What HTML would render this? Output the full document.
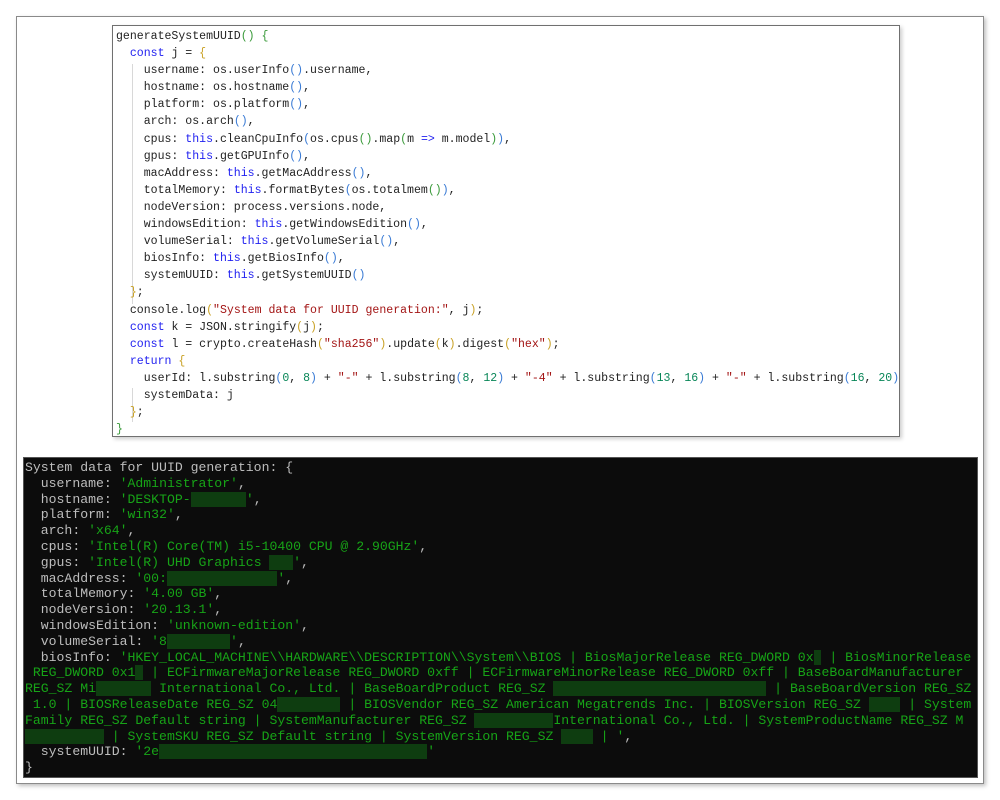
<!DOCTYPE html>
<html><head><meta charset="utf-8"><style>
body{margin:0;width:1000px;height:800px;background:#fff;position:relative;overflow:hidden}
#outer{position:absolute;left:16px;top:16px;width:966px;height:766px;border:1px solid #8a8a8a;box-shadow:2px 2px 4px rgba(0,0,0,.25);background:#fff}
#code{position:absolute;left:112px;top:25px;width:786px;height:410px;border:1px solid #707070;box-shadow:2px 2px 4px rgba(0,0,0,.2);background:#fff;overflow:hidden}
#code pre{margin:0;position:absolute;left:3px;top:2px;font-family:"Liberation Mono",monospace;font-size:11.55px;line-height:17.1px;color:#222}
.k{color:#1f1ff0}.s{color:#a31515}.n{color:#098658}.p{color:#3a7bd5}.g{color:#3a9a3a}.o{color:#c9a227}
.guide{position:absolute;width:1px;background:#d8d8d8}
#con{position:absolute;left:23px;top:457px;width:953px;height:319px;background:#0c0c0c;border:1px solid #555;overflow:hidden}
#con pre{margin:0;position:absolute;left:1px;top:2px;font-family:"Liberation Mono",monospace;font-size:13.15px;line-height:15.8px;color:#bdbdbd;white-space:pre}
.c{color:#17a417}
.r{background:#0e3d10;color:transparent}
</style></head><body>
<div id="outer"></div>
<div id="code">
<div class="guide" style="left:19px;top:38px;height:240px"></div>
<div class="guide" style="left:19px;top:362px;height:34px"></div>
<pre>generateSystemUUID<span class="g">()</span> <span class="g">{</span>
  <span class="k">const</span> j = <span class="o">{</span>
    username: os.userInfo<span class="p">()</span>.username,
    hostname: os.hostname<span class="p">()</span>,
    platform: os.platform<span class="p">()</span>,
    arch: os.arch<span class="p">()</span>,
    cpus: <span class="k">this</span>.cleanCpuInfo<span class="p">(</span>os.cpus<span class="g">()</span>.map<span class="g">(</span>m <span class="k">=&gt;</span> m.model<span class="g">)</span><span class="p">)</span>,
    gpus: <span class="k">this</span>.getGPUInfo<span class="p">()</span>,
    macAddress: <span class="k">this</span>.getMacAddress<span class="p">()</span>,
    totalMemory: <span class="k">this</span>.formatBytes<span class="p">(</span>os.totalmem<span class="g">()</span><span class="p">)</span>,
    nodeVersion: process.versions.node,
    windowsEdition: <span class="k">this</span>.getWindowsEdition<span class="p">()</span>,
    volumeSerial: <span class="k">this</span>.getVolumeSerial<span class="p">()</span>,
    biosInfo: <span class="k">this</span>.getBiosInfo<span class="p">()</span>,
    systemUUID: <span class="k">this</span>.getSystemUUID<span class="p">()</span>
  <span class="o">}</span>;
  console.log<span class="o">(</span><span class="s">"System data for UUID generation:"</span>, j<span class="o">)</span>;
  <span class="k">const</span> k = JSON.stringify<span class="o">(</span>j<span class="o">)</span>;
  <span class="k">const</span> l = crypto.createHash<span class="o">(</span><span class="s">"sha256"</span><span class="o">)</span>.update<span class="o">(</span>k<span class="o">)</span>.digest<span class="o">(</span><span class="s">"hex"</span><span class="o">)</span>;
  <span class="k">return</span> <span class="o">{</span>
    userId: l.substring<span class="p">(</span><span class="n">0</span>, <span class="n">8</span><span class="p">)</span> + <span class="s">"-"</span> + l.substring<span class="p">(</span><span class="n">8</span>, <span class="n">12</span><span class="p">)</span> + <span class="s">"-4"</span> + l.substring<span class="p">(</span><span class="n">13</span>, <span class="n">16</span><span class="p">)</span> + <span class="s">"-"</span> + l.substring<span class="p">(</span><span class="n">16</span>, <span class="n">20</span><span class="p">)</span>
    systemData: j
  <span class="o">}</span>;
<span class="g">}</span></pre>
</div>
<div id="con"><pre>System data for UUID generation: {
  username: <span class="c">'Administrator'</span>,
  hostname: <span class="c">'DESKTOP-<span class="r">XXXXXXX</span>'</span>,
  platform: <span class="c">'win32'</span>,
  arch: <span class="c">'x64'</span>,
  cpus: <span class="c">'Intel(R) Core(TM) i5-10400 CPU @ 2.90GHz'</span>,
  gpus: <span class="c">'Intel(R) UHD Graphics <span class="r">XXX</span>'</span>,
  macAddress: <span class="c">'00:<span class="r">XXXXXXXXXXXXXX</span>'</span>,
  totalMemory: <span class="c">'4.00 GB'</span>,
  nodeVersion: <span class="c">'20.13.1'</span>,
  windowsEdition: <span class="c">'unknown-edition'</span>,
  volumeSerial: <span class="c">'8<span class="r">XXXXXXXX</span>'</span>,
  biosInfo: <span class="c">'HKEY_LOCAL_MACHINE\\HARDWARE\\DESCRIPTION\\System\\BIOS | BiosMajorRelease REG_DWORD 0x<span class="r">X</span> | BiosMinorRelease</span>
<span class="c"> REG_DWORD 0x1<span class="r">X</span> | ECFirmwareMajorRelease REG_DWORD 0xff | ECFirmwareMinorRelease REG_DWORD 0xff | BaseBoardManufacturer</span>
<span class="c">REG_SZ Mi<span class="r">XXXXXXX</span> International Co., Ltd. | BaseBoardProduct REG_SZ <span class="r">XXXXXXXXXXXXXXXXXXXXXXXXXXX</span> | BaseBoardVersion REG_SZ</span>
<span class="c"> 1.0 | BIOSReleaseDate REG_SZ 04<span class="r">XXXXXXXX</span> | BIOSVendor REG_SZ American Megatrends Inc. | BIOSVersion REG_SZ <span class="r">XXXX</span> | System</span>
<span class="c">Family REG_SZ Default string | SystemManufacturer REG_SZ <span class="r">XXXXXXXXXX</span>International Co., Ltd. | SystemProductName REG_SZ M</span>
<span class="c"><span class="r">XXXXXXXXXX</span> | SystemSKU REG_SZ Default string | SystemVersion REG_SZ <span class="r">XXXX</span> | '</span>,
  systemUUID: <span class="c">'2e<span class="r">XXXXXXXXXXXXXXXXXXXXXXXXXXXXXXXXXX</span>'</span>
}</pre></div>
</body></html>
